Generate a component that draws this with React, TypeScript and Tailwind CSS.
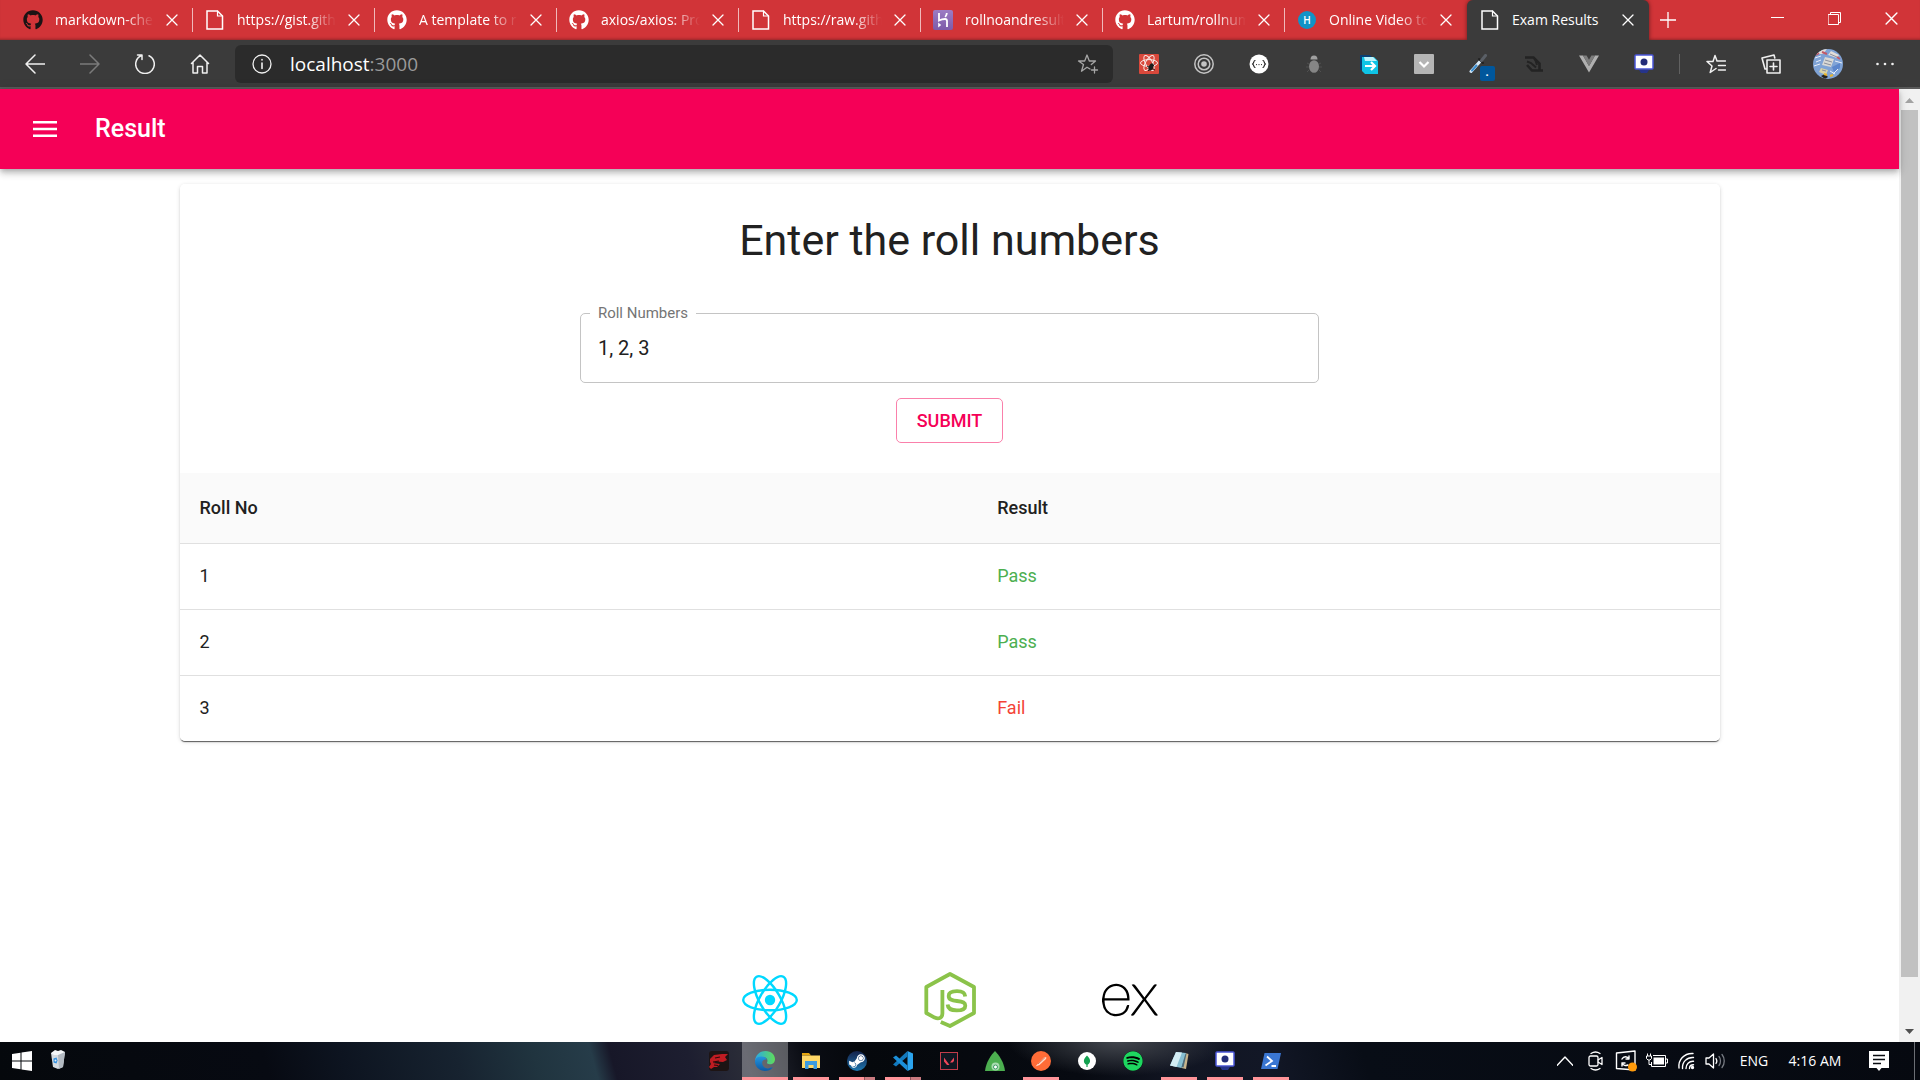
import React, { ReactNode, useState } from "react";
import { FaGithub, FaSpotify, FaSteamSymbol } from "react-icons/fa";
import { SiExpress } from "react-icons/si";

const stroke = { fill: "none", stroke: "currentColor", strokeLinecap: "round", strokeLinejoin: "round" } as const;

function PageIcon() {
  return (
    <svg viewBox="0 0 20 20" className="size-5" {...stroke} strokeWidth="1.500" strokeLinejoin="miter">
      <path d="M2 1h10.500l5 5v13H2z" />
      <path d="M12.500 1v5h5" strokeWidth="1.200" />
    </svg>
  );
}

function CrossIcon({ className }: { className: string }) {
  return (
    <svg viewBox="0 0 12 12" className={className} {...stroke} strokeWidth="1.300">
      <path d="M1 1l10 10M11 1L1 11" />
    </svg>
  );
}

const tabs: { title: string; icon: ReactNode }[] = [
  { title: "markdown-che", icon: <FaGithub className="size-5 text-[#1b1314]" /> },
  { title: "https://gist.gith", icon: <PageIcon /> },
  { title: "A template to r", icon: <FaGithub className="size-5" /> },
  { title: "axios/axios: Pro", icon: <FaGithub className="size-5" /> },
  { title: "https://raw.gith", icon: <PageIcon /> },
  {
    title: "rollnoandresult",
    icon: (
      <span className="flex size-5 items-center justify-center rounded-xs bg-gradient-to-b from-[#9c7cc4] to-[#7d5aa8]">
        <svg viewBox="0 0 20 20" className="size-5" fill="none" stroke="#fff" strokeWidth="1.800">
          <path d="M6 3v7.500c2-1 4-1.500 6-1.500 1.500 0 2 .8 2 2V17" />
          <path d="M13.800 3c0 1.500-.6 2.800-1.600 4" />
          <path d="M5.200 12.500l3 2.500-3 2.500z" fill="#fff" stroke="none" />
        </svg>
      </span>
    ),
  },
  { title: "Lartum/rollnum", icon: <FaGithub className="size-5" /> },
  {
    title: "Online Video to",
    icon: (
      <span className="flex size-[18px] items-center justify-center rounded-full bg-[#1193c7] text-[10px] font-semibold">H</span>
    ),
  },
];

function TabStrip() {
  return (
    <header className="flex h-10 items-center bg-[#d13438] pl-[11px] text-white shadow-[inset_0_-3px_3px_-2px_rgba(0,0,0,0.3)]">
      {tabs.map((tab, i) => (
        <div key={tab.title} className="relative flex h-full min-w-0 max-w-[182px] flex-1 items-center pl-3 pr-[15px]">
          <span className="flex w-5 shrink-0 justify-center">{tab.icon}</span>
          <span className="ml-3 min-w-0 flex-1 whitespace-nowrap text-[14px] leading-5 [mask-image:linear-gradient(to_right,#000_70%,transparent)]">
            {tab.title}
          </span>
          <button aria-label={"Close " + tab.title} className="ml-3 shrink-0">
            <CrossIcon className="size-3" />
          </button>
          {i < tabs.length - 1 && <span className="absolute right-0 top-2 h-6 w-px bg-[#f0b9ba]" />}
        </div>
      ))}
      <div className="flex h-full min-w-0 max-w-[182px] flex-1 items-center rounded-t-md bg-[#3b3b3b] pl-[13px] pr-[15px] shadow-[0_0_4px_rgba(0,0,0,0.5)]">
        <PageIcon />
        <span className="ml-3 flex-1 whitespace-nowrap text-[14px] leading-5">Exam Results</span>
        <button aria-label="Close Exam Results">
          <CrossIcon className="size-3" />
        </button>
      </div>
      <button aria-label="New tab" className="ml-[11px]">
        <svg viewBox="0 0 16 16" className="size-4" {...stroke} strokeWidth="1.300">
          <path d="M8 0v16M0 8h16" />
        </svg>
      </button>
      <div className="ml-auto flex pb-1">
        <button aria-label="Minimise" className="flex w-[57px] justify-center">
          <svg viewBox="0 0 13 13" className="size-[13px]" {...stroke}>
            <path d="M0 5.500h13" />
          </svg>
        </button>
        <button aria-label="Restore" className="flex w-[57px] justify-center">
          <svg viewBox="0 0 13 13" className="size-[13px]" {...stroke} strokeLinejoin="miter">
            <path d="M.5 2.500h10v10H.5zM2.500 2.500v-2h10v10h-2" />
          </svg>
        </button>
        <button aria-label="Close window" className="flex w-[57px] justify-center">
          <CrossIcon className="size-[13px]" />
        </button>
      </div>
    </header>
  );
}

function ToolButton({ label, children }: { label: string; children: ReactNode }) {
  return (
    <button aria-label={label} className="flex h-10 w-[55px] shrink-0 items-center justify-center">
      {children}
    </button>
  );
}

function CaptureIcon() {
  return (
    <svg viewBox="0 0 20 20" className="size-5">
      <path d="M5 16h10l-2 3H7z" fill="#26348a" />
      <rect x="1" y="1" width="18" height="14" rx="1" fill="#fff" stroke="#4a55d8" strokeWidth="1.500" />
      <circle cx="10" cy="8" r="3.500" fill="#232c78" />
    </svg>
  );
}

function Toolbar() {
  return (
    <nav className="flex h-[49px] items-center border-b-2 border-[#5a5a5a] bg-[#3b3b3b] pl-[7px] pr-2 text-[#f0f0f0]">
      <ToolButton label="Back">
        <svg viewBox="0 0 20 20" className="size-5" {...stroke} strokeWidth="1.500">
          <path d="M20 10H1M10 1l-9 9 9 9" />
        </svg>
      </ToolButton>
      <ToolButton label="Forward">
        <svg viewBox="0 0 20 20" className="size-5 text-[#7b7b7b]" {...stroke} strokeWidth="1.500">
          <path d="M0 10h19M10 1l9 9-9 9" />
        </svg>
      </ToolButton>
      <ToolButton label="Refresh">
        <svg viewBox="0 0 20 20" className="size-5" {...stroke} strokeWidth="1.500">
          <path d="M14 1.800A9.300 9.300 0 1 1 6 1.800M2.500 1H7v4.500" />
        </svg>
      </ToolButton>
      <ToolButton label="Home">
        <svg viewBox="0 0 20 20" className="size-5" {...stroke} strokeWidth="1.500">
          <path d="M1.500 9.500L10 1l8.500 8.500M3 8.500V19h4.500v-6.500h5V19H17V8.500" />
        </svg>
      </ToolButton>
      <div className="ml-2 flex h-[38px] min-w-0 flex-1 items-center rounded-md bg-[#2b2b2b] pl-[17px] pr-[14px]">
        <svg viewBox="0 0 20 20" className="size-5 shrink-0" {...stroke} strokeWidth="1.300">
          <circle cx="10" cy="10" r="9" />
          <path d="M10 9v5.500M10 5.500v.5" strokeWidth="1.600" />
        </svg>
        <span className="ml-[18px] flex-1 text-[19px] leading-6 text-white">
          localhost<span className="text-[#9a9a9a]">:3000</span>
        </span>
        <svg viewBox="0 0 22 20" className="h-5 w-[22px] text-[#a6a6a6]" {...stroke} strokeWidth="1.300">
          <path d="M13 15l-3-1.800-5.500 4 2-6.700L1.500 7h6.200L10 1l2.300 6h6.200l-4.200 3.500M17.500 13v6M14.500 16h6" />
        </svg>
      </div>
      <div className="w-2" />
      <ToolButton label="React debugger">
        <svg viewBox="0 0 20 20" className="size-5" fill="none" stroke="#f8e9e6">
          <rect width="20" height="20" rx="1" fill="#d9483b" stroke="none" />
          <ellipse cx="10" cy="9" rx="8.500" ry="3.400" />
          <ellipse cx="10" cy="9" rx="8.500" ry="3.400" transform="rotate(60 10 9)" />
          <ellipse cx="10" cy="9" rx="8.500" ry="3.400" transform="rotate(120 10 9)" />
          <ellipse cx="12" cy="13" rx="2.200" ry="3.800" transform="rotate(25 12 13)" fill="#1c1c1c" stroke="none" />
          <path d="M8 12l8 4M15 11l-6 6" stroke="#1c1c1c" />
        </svg>
      </ToolButton>
      <ToolButton label="Rings">
        <svg viewBox="0 0 20 20" className="size-5" fill="none" stroke="#c4c4c4" strokeWidth="1.500">
          <circle cx="10" cy="10" r="9.200" />
          <circle cx="10" cy="10" r="5.800" />
          <circle cx="10" cy="10" r="2.800" fill="#c4c4c4" stroke="none" />
        </svg>
      </ToolButton>
      <ToolButton label="JSON viewer">
        <svg viewBox="0 0 20 20" className="size-5" {...stroke} stroke="#222" strokeWidth="1.200">
          <circle cx="10" cy="10" r="9.500" fill="#fff" stroke="none" />
          <path d="M6 6.500C4.500 6.500 5.100 9.500 3.500 10c1.600.5 1 3.500 2.500 3.500M14 6.500c1.500 0 .9 3 2.500 3.500-1.600.5-1 3.500-2.500 3.500M7.500 10.500v.1M10 10.500v.1M12.500 10.500v.1" />
        </svg>
      </ToolButton>
      <ToolButton label="Bug tracker">
        <svg viewBox="0 0 20 20" className="size-5">
          <path d="M6.500 5.500a3.500 4 0 0 1 7 0z" fill="#a0a0a0" />
          <ellipse cx="10" cy="12.500" rx="5" ry="6.300" fill="#858585" />
          <path d="M3 9l2 1M2 13h3M3 18l2-2M17 9l-2 1M18 13h-3M17 18l-2-2" stroke="#505050" />
        </svg>
      </ToolButton>
      <ToolButton label="Share page">
        <svg viewBox="0 0 20 20" className="size-5">
          <path d="M1 1h10l3 3v12H1z" fill="#0a3f73" />
          <path d="M3 3h12l4 4v13H6l-3-3z" fill="#0fc4e6" />
          <path d="M5 3h9l4 4H6z" fill="#bff3fb" />
          <path d="M6 12h10M12 8l4 4-4 4" fill="none" stroke="#fff" strokeWidth="2.200" />
        </svg>
      </ToolButton>
      <ToolButton label="Pocket">
        <svg viewBox="0 0 20 20" className="size-5">
          <rect width="20" height="20" rx="1" fill="#b5b5b5" />
          <path d="M5.500 8l4.500 4.500L14.500 8" fill="none" stroke="#fff" strokeWidth="2.200" />
        </svg>
      </ToolButton>
      <ToolButton label="Colour picker">
        <span className="relative">
          <svg viewBox="0 0 20 20" className="size-5" {...stroke}>
            <path d="M2 17.500L11 7.500" stroke="#d7e9f7" strokeWidth="3" />
            <path d="M3 16.500l4.500-5" stroke="#3d8fd0" strokeWidth="2" />
            <path d="M10 5l4 4" stroke="#222" strokeWidth="2" />
            <path d="M12.500 6.500l4-5" stroke="#5a5f66" strokeWidth="3" />
          </svg>
          <span className="absolute left-[11px] top-[12px] flex size-[15px] justify-center rounded-xs bg-[#00579c] text-[11px] font-bold leading-3 text-white">.</span>
        </span>
      </ToolButton>
      <ToolButton label="Socket monitor">
        <svg viewBox="0 0 20 20" className="size-5" fill="none" stroke="#232323" strokeWidth="2.600">
          <path d="M1 3.500h8.500l6 6V16" />
          <path d="M3 7.500l4 1.500 5 4.500M11 5l2 6" strokeWidth="2" />
          <path d="M3 11l5 5.500h11" />
        </svg>
      </ToolButton>
      <ToolButton label="Vue devtools">
        <svg viewBox="0 0 20 20" className="size-5">
          <path d="M0 1.500h4L10 12l6-10.500h4L10 18.500z" fill="#b0b0b0" />
          <path d="M4 1.500h3.600L10 5.700l2.400-4.200H16L10 12z" fill="#7d7d7d" />
        </svg>
      </ToolButton>
      <ToolButton label="Screen capture">
        <CaptureIcon />
      </ToolButton>
      <div className="ml-2 mr-2 h-5 w-px bg-[#616161]" />
      <ToolButton label="Favourites">
        <svg viewBox="0 0 20 20" className="size-5" {...stroke} strokeWidth="1.500">
          <path d="M11 7h8.500M12.500 11.500h7M12.500 16h7M10 14.500L4.200 18.500 6 12 1 7.500h6L9 1.500 11 7" />
        </svg>
      </ToolButton>
      <ToolButton label="Collections">
        <svg viewBox="0 0 20 20" className="size-5" {...stroke} strokeWidth="1.600">
          <path d="M6 6h13v13H6zM12.500 9v7M9 12.500h7M5 15L4 15 1 4l12-3 .8 3" />
        </svg>
      </ToolButton>
      <button aria-label="Profile" className="flex h-10 w-[59px] shrink-0 items-center justify-center">
        <svg viewBox="0 0 30 30" className="size-[30px] rounded-full">
          <rect width="30" height="30" fill="#7fa3d6" />
          <path d="M0 0h14l-4 5H0zM18 2l8 4-2 3-9-3z" fill="#e3ddd8" />
          <path d="M12 8l9 2-3 8-9-2z" fill="#d9d9d6" />
          <path d="M8 19l7 2-2 5-7-3z" fill="#d8d3a8" />
          <path d="M19 18l8-4v5l-6 4z" fill="#5b86cc" />
          <path d="M2 9l6-2M3 13l5-2M22 12l7 2M20 25l5-5M1 17l6-2M17 22l5 3" stroke="#e8eefa" />
          <path d="M12 11l7 2M11 14l7 2M9 21l4 1M17 5l7 3" stroke="#8a8f9c" />
          <path d="M9 3l5 2M3 6l3-2M24 8l3 2" stroke="#c25a68" strokeWidth="2" />
          <path d="M8 27l4-2 3 3-3 2z" fill="#222" />
          <path d="M11 25l3 1M17 27l3-1" stroke="#e8b52c" strokeWidth="2" />
        </svg>
      </button>
      <ToolButton label="Settings and more">
        <svg viewBox="0 0 18 4" className="h-1 w-[18px]" fill="currentColor">
          <circle cx="1.500" cy="2" r="1.300" />
          <circle cx="9" cy="2" r="1.300" />
          <circle cx="16.500" cy="2" r="1.300" />
        </svg>
      </ToolButton>
    </nav>
  );
}

const rows = [
  { roll: "1", result: "Pass" },
  { roll: "2", result: "Pass" },
  { roll: "3", result: "Fail" },
];

function ResultPage() {
  const [rolls, setRolls] = useState("1, 2, 3");
  return (
    <main className="flex min-w-0 flex-1 flex-col bg-white font-[Roboto,sans-serif] text-[#212121]">
      <div className="z-10 flex h-20 shrink-0 items-center bg-[#f50057] pl-[30px] text-white shadow-[0_2px_5px_-1px_rgba(0,0,0,0.2),0_5px_6px_0_rgba(0,0,0,0.14),0_1px_12px_0_rgba(0,0,0,0.12)]">
        <button aria-label="Menu" className="flex size-[30px] items-center justify-center">
          <svg viewBox="0 0 24 16" className="h-4 w-6" fill="currentColor">
            <path d="M0 0h24v2.500H0zM0 6.700h24v2.600H0zM0 13.500h24V16H0z" />
          </svg>
        </button>
        <h1 className="ml-[35px] text-[25px] font-medium leading-10">Result</h1>
      </div>
      <div className="mx-auto mt-[15px] w-full max-w-[1600px] px-[30px]">
        <div className="rounded-[5px] shadow-[0_2px_1px_-1px_rgba(0,0,0,0.5),0_1px_1px_0_rgba(0,0,0,0.2),0_1px_4px_0_rgba(0,0,0,0.15)]">
          <form className="flex flex-col items-center rounded-t-[5px] bg-white py-[30px]" onSubmit={(e) => e.preventDefault()}>
            <h2 className="text-[43px] leading-[52px]">Enter the roll numbers</h2>
            <div className="relative mt-[47px] w-[48%]">
              <label htmlFor="rolls" className="absolute -top-[9px] left-[10px] bg-white px-2 text-[15px] leading-[18px] text-[#757575]">
                Roll Numbers
              </label>
              <input
                id="rolls"
                value={rolls}
                onChange={(e) => setRolls(e.target.value)}
                className="block h-[70px] w-full rounded-[5px] border border-[#c4c4c4] px-[17px] text-[20px] outline-none"
              />
            </div>
            <button className="mt-[15px] h-[45px] rounded-[5px] border border-[#fa80ab] px-5 text-[18px] font-medium leading-6 text-[#f50057]">
              SUBMIT
            </button>
          </form>
          <table className="w-full table-fixed border-collapse overflow-hidden rounded-b-[5px] bg-white text-left text-[18px] leading-6">
            <thead>
              <tr className="h-[70px] border-b border-[#e0e0e0] bg-[#fafafa]">
                <th className="w-[51.8%] px-5 font-medium">Roll No</th>
                <th className="px-5 font-medium">Result</th>
              </tr>
            </thead>
            <tbody>
              {rows.map((row) => (
                <tr key={row.roll} className="h-[66px] border-b border-[#e0e0e0] last:border-b-0">
                  <td className="px-5">{row.roll}</td>
                  <td className={row.result === "Pass" ? "px-5 text-[#4caf50]" : "px-5 text-[#f44336]"}>{row.result}</td>
                </tr>
              ))}
            </tbody>
          </table>
        </div>
      </div>
      <footer className="mt-auto flex justify-center gap-[124px] pb-[14px]">
        <svg viewBox="0 0 56 56" className="size-14" fill="none" stroke="#00d8ff" strokeWidth="2.400" role="img" aria-label="React">
          <circle cx="28" cy="28" r="5.200" fill="#00d8ff" stroke="none" />
          <ellipse cx="28" cy="28" rx="26.800" ry="10.300" />
          <ellipse cx="28" cy="28" rx="26.800" ry="10.300" transform="rotate(60 28 28)" />
          <ellipse cx="28" cy="28" rx="26.800" ry="10.300" transform="rotate(120 28 28)" />
        </svg>
        <svg viewBox="0 0 56 56" className="size-14" fill="none" stroke="#8bc34a" strokeWidth="3.800" strokeLinejoin="round" role="img" aria-label="Node.js">
          <path d="M18.800 50L28 54 52 41V15L28 2 4.300 15v26l8.300 4.600c4.500 2 7.800 0 7.800-4.200V18" />
          <path d="M43.200 24.500c-.3-4-2.800-5.300-8.200-5.300-5.300 0-8.300 1.500-8.300 4.700 0 3.600 3 4.500 8.300 5.100 6.300.7 8.300 1.700 8.300 4.700 0 3.500-3 4.700-8.500 4.700-6 0-8.900-1.600-9.200-5.900" />
        </svg>
        <SiExpress className="size-14 text-black" role="img" aria-label="Express" />
      </footer>
    </main>
  );
}

function ScrollBar() {
  return (
    <div className="flex w-[21px] shrink-0 flex-col items-center bg-[#f1f1f1]">
      <svg viewBox="0 0 21 21" className="size-[21px]">
        <path d="M6 14l4.500-5 4.500 5z" fill="#a3a3a3" />
      </svg>
      <div className="w-[17px] flex-[867] bg-[#c1c1c1]" />
      <div className="flex-[44]" />
      <svg viewBox="0 0 21 21" className="size-[21px]">
        <path d="M6 8l4.500 5L15 8z" fill="#505050" />
      </svg>
    </div>
  );
}

const apps: { name: string; state: string; icon: ReactNode }[] = [
  {
    name: "Game",
    state: "idle",
    icon: (
      <svg viewBox="0 0 20 20" className="size-5">
        <rect width="20" height="20" rx="3" fill="#1d1414" />
        <path d="M1 8l4-4 8-1 6 0-3 3 2 3-4 2-6-.5-4 1.500 7 1-3 3H5l-3 2-2-2 2-3-1-2z" fill="#c01c22" />
        <path d="M6 7l5-1M4 11l6-1M5 14l4 .5" stroke="#2a0a0b" strokeWidth="1.200" />
      </svg>
    ),
  },
  {
    name: "Edge",
    state: "active",
    icon: (
      <svg viewBox="0 0 20 20" className="size-5">
        <defs>
          <linearGradient id="edgeTop" x1="0" x2="1">
            <stop offset="0" stopColor="#2aa9e6" />
            <stop offset="1" stopColor="#5fdc5a" />
          </linearGradient>
          <linearGradient id="edgeLow" x1="0" y1="0" x2="0" y2="1">
            <stop offset="0" stopColor="#2496df" />
            <stop offset="1" stopColor="#0c59a4" />
          </linearGradient>
        </defs>
        <path d="M0 10C.500 4 5 0 10.500 0 16.500 0 20 4 20 8.200c0 3-2.200 5-5 5-2.300 0-3.400-.9-3-1.700 1.400-2.500-.3-5.500-4-5.500C4 6 1 7.500 0 10z" fill="url(#edgeTop)" />
        <path d="M0 10c.6-3.500 3.500-4.800 7-4.500 2.500.2 4.300 1.200 4.700 3.200-3-.8-5 1.300-4.400 4.300.7 3.500 4.500 5.500 8 3.800 1.500-.6 2.600-.8 2.200 0C15.800 18.900 13 20 10 20 4 20-.3 15.500 0 10z" fill="url(#edgeLow)" />
      </svg>
    ),
  },
  {
    name: "Explorer",
    state: "open",
    icon: (
      <svg viewBox="0 0 20 20" className="size-5">
        <path d="M1 2h7l2 2.500H1z" fill="#e5a50f" />
        <path d="M1 4.500h18V17H1z" fill="#ffd766" />
        <path d="M4 18v-8h12v8h-3.500v-4h-5v4z" fill="#3c9be0" />
      </svg>
    ),
  },
  {
    name: "Steam",
    state: "multi",
    icon: (
      <span className="flex size-5 items-center justify-center rounded-full bg-gradient-to-b from-[#12224a] to-[#1a77b0] text-white">
        <FaSteamSymbol className="size-[18px]" />
      </span>
    ),
  },
  {
    name: "VS Code",
    state: "multi",
    icon: (
      <svg viewBox="0 0 20 20" className="size-5">
        <path d="M14.500 0L20 2.400v15.200L14.500 20z" fill="#2ba4ee" />
        <path d="M14.500 0v5.500L3 15.500 0 13.500z" fill="#1279bd" />
        <path d="M14.500 20v-5.500L3 4.500 0 6.500z" fill="#1b8fd8" />
      </svg>
    ),
  },
  {
    name: "Valorant",
    state: "idle",
    icon: (
      <svg viewBox="0 0 20 20" className="size-5">
        <rect x="1.500" y="1.500" width="17" height="17" fill="#0f1722" stroke="#c13c4a" />
        <path d="M5 6.500l5.500 7.500H8L5 10.500zM15 6.500l-4 5h2.600L15 10z" fill="#f0475a" />
      </svg>
    ),
  },
  {
    name: "Robo 3T",
    state: "idle",
    icon: (
      <svg viewBox="0 0 20 20" className="size-5">
        <path d="M10 0c4 4 9 11 10 20H0C1 11 6 4 10 0z" fill="#4caf50" />
        <circle cx="10.500" cy="15.500" r="4" fill="#a9dcb0" />
        <circle cx="10.500" cy="16" r="2" fill="#fff" stroke="#3b9a62" />
      </svg>
    ),
  },
  {
    name: "Postman",
    state: "open",
    icon: (
      <svg viewBox="0 0 20 20" className="size-5">
        <circle cx="10" cy="10" r="10" fill="#ff6c37" />
        <path d="M4.500 15.500l3-3.500 6-6 2 .5-.5 1.500-6.500 6z" fill="#ffdccb" />
        <path d="M7 13L14 6.500" stroke="#c9502a" strokeWidth=".7" />
      </svg>
    ),
  },
  {
    name: "MongoDB Compass",
    state: "idle",
    icon: (
      <svg viewBox="0 0 20 20" className="size-5">
        <circle cx="10" cy="10" r="9" fill="#fff" />
        <path d="M10 4.500c4 4 4 7 .6 9.300V16H9.400v-2.200C6 11.500 6 8.500 10 4.500z" fill="#13a150" />
      </svg>
    ),
  },
  {
    name: "Spotify",
    state: "idle",
    icon: (
      <span className="rounded-full bg-black">
        <FaSpotify className="size-5 text-[#1ed760]" />
      </span>
    ),
  },
  {
    name: "Notepad",
    state: "open",
    icon: (
      <svg viewBox="0 0 20 20" className="size-5">
        <path d="M16 2l3.500 1L17 18l-4.500-1z" fill="#c8b48c" />
        <path d="M7 1l10 1-4.500 15L1 14.500z" fill="#86bfd2" />
        <path d="M7 1l6 .6L7.500 16 1 14.500z" fill="#d3edf4" />
        <path d="M16.500 2.500l1 .3-3 13.700-2-.5z" fill="#4b6c7c" />
      </svg>
    ),
  },
  { name: "Screen capture", state: "open", icon: <CaptureIcon /> },
  {
    name: "PowerShell",
    state: "open",
    icon: (
      <svg viewBox="0 0 20 20" className="size-5">
        <path d="M3.500 2H20l-3.500 16H0z" fill="#3a76d2" />
        <path d="M6 5.500l5 4.500-6.500 4.500M10.500 15H15" fill="none" stroke="#fff" strokeWidth="1.800" />
      </svg>
    ),
  },
];

function TaskBar() {
  return (
    <footer className="relative flex h-[38px] shrink-0 items-center bg-[#060910] bg-[radial-gradient(ellipse_110px_34px_at_1118px_0px,#42464d_0%,#42464d00_100%),linear-gradient(75deg,#05080c_0%,#070a12_14%,#0d1420_18%,#172330_24%,#20343f_28%,#263c49_31%,#171728_32%,#1d1e30_36%,#2b2d38_39%,#0b0d14_42%,#05080c_45%,#070a11_56%,#111522_61%,#121726_66%,#080d16_71%,#060910_100%)] text-white">
      <button aria-label="Start" className="ml-3">
        <svg viewBox="0 0 20 20" className="size-5" fill="#fff">
          <path d="M0 3l8.500-1.300v7.800H0zM9.500 1.500L20 0v9.500H9.500zM0 10.500h8.500v7.800L0 17zM9.500 10.500H20V20L9.500 18.500z" />
        </svg>
      </button>
      <button aria-label="Recycle Bin" className="mb-1 ml-4">
        <svg viewBox="0 0 20 20" className="size-5">
          <path d="M3 4l14-1-2 15-5 2-5-2z" fill="#d6dbe0" />
          <path d="M3 4l4-3 3 1 3-1 4 2-3 3H6z" fill="#f5f7f9" />
          <path d="M10 6l7-3-2 15-4 2z" fill="#b3bac2" />
          <path d="M5.500 9.500l3-1 1 3-1 3-3-1z" fill="#2f8fe0" />
          <circle cx="7.500" cy="11.500" r="1" fill="#e8eef4" />
        </svg>
      </button>
      <div className="absolute left-1/2 top-0 flex h-full -translate-x-[264px]">
        {apps.map((app) => (
          <button
            key={app.name}
            aria-label={app.name}
            className={
              app.state === "active"
                ? "relative flex w-[46px] items-center justify-center bg-white/30"
                : "relative flex w-[46px] items-center justify-center"
            }
          >
            {app.icon}
            {app.state === "active" && <span className="absolute inset-x-0 bottom-0 h-[3px] bg-[#ff9499]" />}
            {app.state === "open" && <span className="absolute inset-x-[5px] bottom-0 h-[3px] bg-[#ff9499]" />}
            {app.state === "multi" && (
              <span className="absolute inset-x-[5px] bottom-0 flex h-[3px]">
                <span className="flex-1 bg-[#ff9499]" />
                <span className="w-[11px] border-l border-[#8c5359] bg-[#c97a80]" />
              </span>
            )}
          </button>
        ))}
      </div>
      <div className="ml-auto flex h-full items-center">
        <button aria-label="Show hidden icons">
          <svg viewBox="0 0 16 10" className="h-[10px] w-4" {...stroke} strokeWidth="1.400">
            <path d="M0 9.500L8 1l8 8.500" />
          </svg>
        </button>
        <svg viewBox="0 0 16 20" className="ml-[15px] h-5 w-4" {...stroke} strokeWidth="1.300">
          <rect x="1" y="5" width="9" height="10" rx="1.500" />
          <path d="M10 9l4-2.500v7L10 11M3 2.500C6 .5 9 .5 12 2.500M3 17.500c3 2 6 2 9 0" />
        </svg>
        <svg viewBox="0 0 22 22" className="ml-[11px] size-[22px]" {...stroke} strokeWidth="1.400">
          <path d="M1.500 3L20 1v19l-18.500-1.500z" />
          <path d="M7 9c1.500-3 5.500-3 7 0V6M14 9h-3M7 13c1 2.500 4 3 6 2M7 13v3M7 13h3" />
          <circle cx="17.500" cy="17" r="4.500" fill="#ff9a0a" stroke="none" />
        </svg>
        <svg viewBox="0 0 22 16" className="ml-[9px] h-4 w-[22px]" fill="none" stroke="currentColor">
          <path d="M7 2.500h12.500v11h-14V9M20 6h1.500v4H20" />
          <path d="M7.500 4.500h10.500v7H7.500z" fill="currentColor" stroke="none" />
          <path d="M.5 3h5v2.500L4 7H2L.5 5.500zM1.500 .5V3M4.500 .5V3M3 7v4.500h2.500" />
        </svg>
        <svg viewBox="0 0 18 18" className="ml-[9px] size-[18px]" {...stroke} strokeWidth="1.400">
          <path d="M2 16C1 8 7 1 16 1.500M5.500 16.500C5 10 10 5 16.500 5.500M9 16.500c0-4 3-7.500 7.500-7.200M12.500 16.500c0-2 1.500-3.700 4-3.700" />
          <circle cx="15.500" cy="15.500" r="1" fill="currentColor" />
        </svg>
        <svg viewBox="0 0 22 18" className="ml-[10px] h-[18px] w-[22px]" {...stroke} strokeWidth="1.300">
          <path d="M1 6h3l4.500-4v14L4 12H1zM11 6.500c1 1.500 1 3.500 0 5" />
          <path d="M14 4.500c2 2.500 2 6.500 0 9M17 2.500c3 3.500 3 9.500 0 13" stroke="#777b82" />
        </svg>
        <span className="ml-3 w-[30px] text-center text-[14px] leading-5">ENG</span>
        <span className="ml-4 w-[60px] text-center text-[14px] leading-5 whitespace-nowrap">4:16 AM</span>
        <button aria-label="Notifications" className="ml-6">
          <svg viewBox="0 0 20 20" className="size-5">
            <path d="M0 0h20v17h-7.500L10 20l-2.500-3H0z" fill="#fff" />
            <path d="M4 4.500h12M4 8.500h12M4 12.500h8" stroke="#0a0c12" strokeWidth="1.300" />
          </svg>
        </button>
        <div className="ml-[25px] mr-[5px] h-full w-px bg-[#6b6e74]" />
      </div>
    </footer>
  );
}

export default function App() {
  return (
    <div className="flex min-h-screen flex-col font-['Open_Sans','Noto_Sans',sans-serif]">
      <TabStrip />
      <Toolbar />
      <div className="flex flex-1">
        <ResultPage />
        <ScrollBar />
      </div>
      <TaskBar />
    </div>
  );
}
